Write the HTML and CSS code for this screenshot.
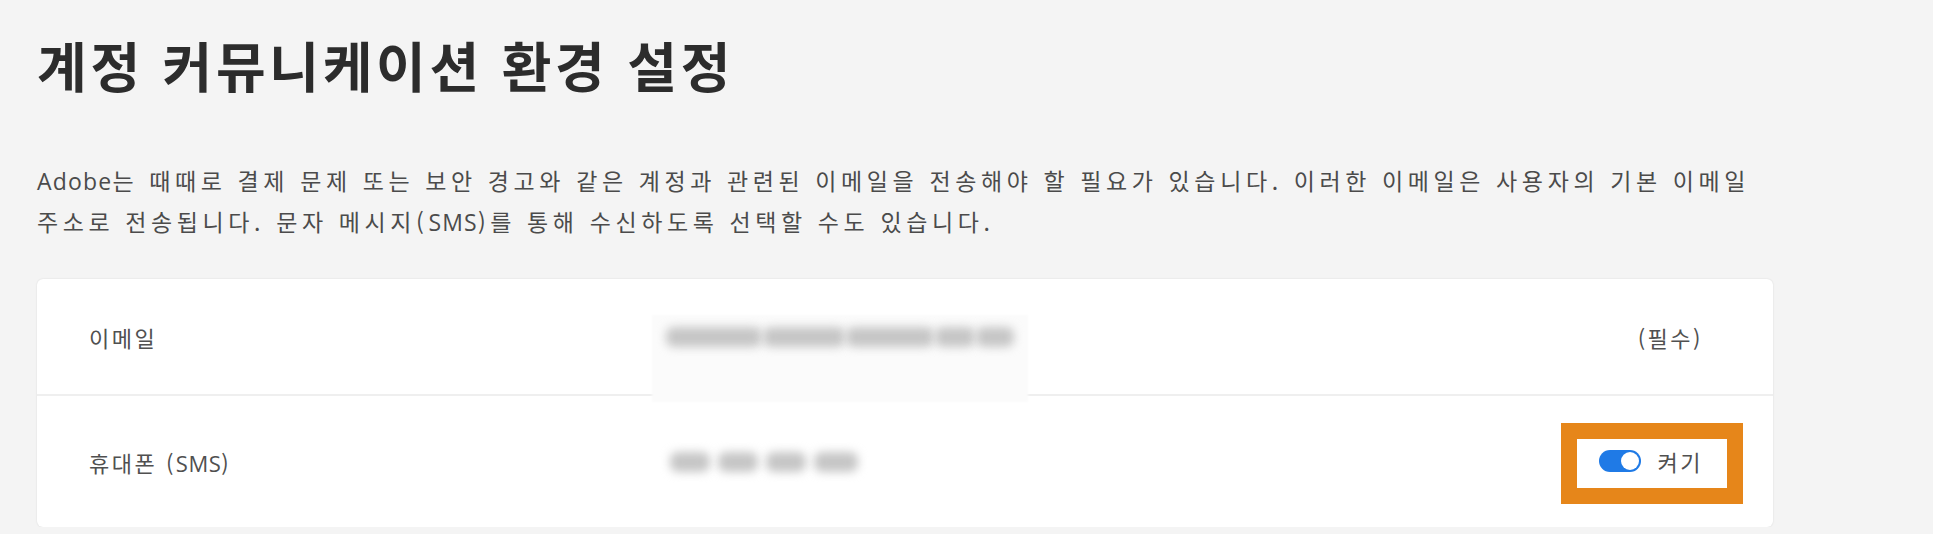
FILE: index.html
```html
<!DOCTYPE html>
<html lang="ko">

<head>
    <meta charset="UTF-8">
    <meta name="viewport" content="width=device-width, initial-scale=1.0">
    <title>계정 커뮤니케이션 환경 설정</title>
    <link rel="stylesheet" href="styles.css">
</head>

<body>

    <main class="page">
        <h1 class="title">계정 커뮤니케이션 환경 설정</h1>
        <p class="intro"><span class="latin">Adobe</span>는 때때로 결제 문제 또는 보안 경고와 같은 계정과 관련된 이메일을 전송해야 할 필요가 있습니다. 이러한 이메일은 사용자의 기본 이메일 주소로 전송됩니다. 문자 메시지(<span class="latin">SMS</span>)를 통해 수신하도록 선택할 수도 있습니다.</p>

        <section class="card">
            <div class="row row-email">
                <span class="label">이메일</span>
                <span class="value">
                    <span class="blur" style="width: 96px"></span>
                    <span class="blur" style="width: 82px"></span>
                    <span class="blur" style="width: 88px"></span>
                    <span class="blur" style="width: 40px"></span>
                    <span class="blur" style="width: 38px"></span>
                </span>
                <span class="status">(필수)</span>
                <span class="patch"></span>
            </div>
            <div class="row row-phone">
                <span class="label">휴대폰 (<span class="latin">SMS</span>)</span>
                <span class="value value-phone">
                    <span class="blur" style="width: 40px"></span>
                    <span class="blur" style="width: 40px"></span>
                    <span class="blur" style="width: 40px"></span>
                    <span class="blur" style="width: 44px"></span>
                </span>
                <span class="status">
                    <span class="toggle">
                        <span class="switch"><span class="knob"></span></span>
                        켜기
                    </span>
                </span>
            </div>
        </section>
    </main>

</body>

</html>
```

FILE: styles.css
```css
body {
    margin: 0;
    background-color: #f4f4f4;
    font-family: "Open Sans", "Noto Sans CJK KR", sans-serif;
    color: #4b4b4b;
}

.page {
    padding: 0 136px 0 37px;
}

.title {
    margin: 0;
    padding-top: 30px;
    font-family: "Noto Sans CJK KR", sans-serif;
    font-size: 54px;
    line-height: 70px;
    font-weight: 700;
    letter-spacing: 3.7px;
    color: #2c2c2c;
}

.intro {
    margin: 60px 0 0;
    font-family: "Noto Sans CJK KR", sans-serif;
    font-size: 23px;
    line-height: 40px;
    letter-spacing: 4.6px;
    word-break: keep-all;
    color: #4b4b4b;
}

.latin {
    font-family: "Open Sans", sans-serif;
    letter-spacing: 1.2px;
}

.card {
    margin-top: 37px;
    width: 1736px;
    background-color: #fff;
    border-radius: 6px;
    box-shadow: 0 0 2px rgba(0, 0, 0, 0.12);
}

.row {
    display: grid;
    grid-template-columns: 573px 1fr auto;
    align-items: center;
    padding: 0 70px 0 52px;
    font-family: "Noto Sans CJK KR", sans-serif;
    font-size: 22px;
    letter-spacing: 2.5px;
    color: #505050;
}

.row .latin {
    font-size: 22px;
    letter-spacing: 0.5px;
}

.row-email {
    height: 115px;
    position: relative;
    z-index: 1;
}

.row-phone {
    height: 131px;
    border-top: 2px solid #efefef;
}

.value {
    display: flex;
    align-items: center;
    gap: 1px;
    padding-left: 4px;
}

.value-phone {
    gap: 8px;
    padding-left: 8px;
}

/* blurred personal data, as in the screenshot */
.patch {
    position: absolute;
    left: 615px;
    top: 36px;
    width: 376px;
    height: 87px;
    background-color: #fbfbfb;
    filter: blur(1px);
    z-index: -1;
}

.blur {
    height: 20px;
    background-color: #c6c6c6;
    border-radius: 8px;
    filter: blur(5px);
}

.status {
    justify-self: end;
}

.toggle {
    position: relative;
    display: inline-flex;
    align-items: center;
    gap: 17px;
    height: 30px;
}

/* orange highlight drawn over the screenshot */
.toggle::after {
    content: "";
    position: absolute;
    left: -38px;
    right: -40px;
    top: -23px;
    bottom: -28px;
    border: 16px solid #e6861a;
}

.switch {
    position: relative;
    width: 42px;
    height: 22px;
    border-radius: 11px;
    background-color: #1f7ae6;
}

.knob {
    position: absolute;
    right: 2px;
    top: 2px;
    width: 18px;
    height: 18px;
    border-radius: 50%;
    background-color: #fff;
}
```
